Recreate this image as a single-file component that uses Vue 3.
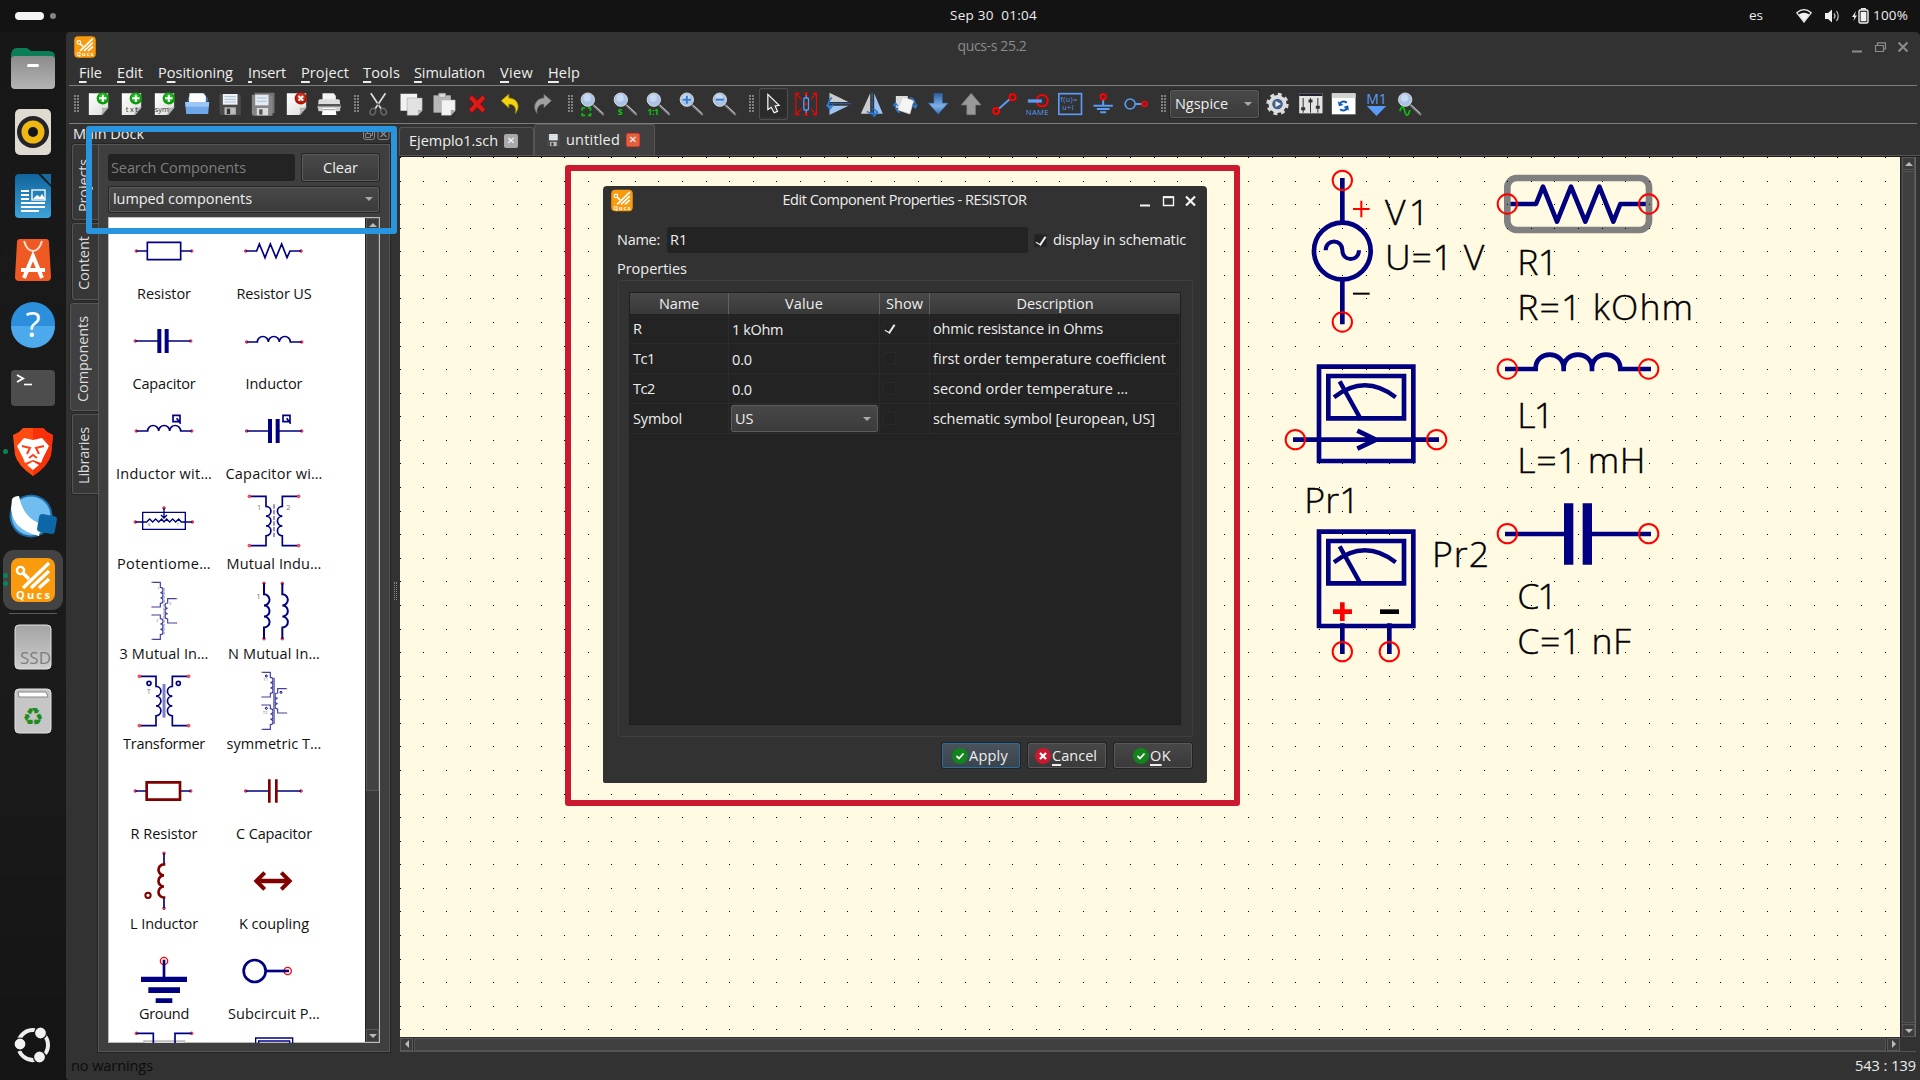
<script setup>
const measure = (el) => {
  const r = document.createRange()
  r.selectNodeContents(el)
  const b = r.getBoundingClientRect()
  return Math.max(b.width, b.height)
}
// Tracks a label so that it fills the given advance width
const vFit = {
  mounted(el, { value }) {
    if (!value) return
    const n = el.textContent.length
    el.style.letterSpacing = ((value - measure(el)) / n).toFixed(3) + 'px'
  },
}

const menus = [
  ['F', 'ile', 23, 38], ['E', 'dit', 26, 41], ['P', 'ositioning', 75, 90, 'o'], ['I', 'nsert', 38, 53],
  ['P', 'roject', 48, 62], ['T', 'ools', 37, 51], ['S', 'imulation', 71, 86], ['V', 'iew', 33, 48], ['H', 'elp', 32, 40],
]

/* ---------- toolbar glyphs (units: one third of a pixel, origin in the centre) ---------- */
const page = '<path d="M-28-32H30V12L12 33H-28Z" fill="url(#pg)"/><path d="M30 10L10 33Q18 20 12 12Q20 16 30 10Z" fill="#bbb" stroke="#888" stroke-width="1.5"/>'
const plus = '<circle cx="14" cy="-17" r="18.5" fill="#0a9a0a"/><circle cx="14" cy="-19" r="13" fill="#22b822"/><path d="M14-28V-6M3-17H25" stroke="#fff" stroke-width="6"/>'
const floppy = '<path d="M-32-30H26L32-24V33H-28L-32 28Z" fill="#4a4a4a"/><rect x="-22" y="-30" width="44" height="32" fill="#eef3f8"/><path d="M-17-22H17M-17-14H17M-17-6H17" stroke="#aebfd0" stroke-width="3"/><rect x="-17" y="10" width="34" height="22" fill="#bbb"/><rect x="-10" y="14" width="10" height="16" fill="#333"/>'
const lens = '<path d="M4 4L33 31" stroke="#777" stroke-width="7" stroke-linecap="round"/><path d="M6 4L32 28" stroke="#ccc" stroke-width="3"/><circle cx="-13" cy="-13" r="20" fill="#a9c4e6" stroke="#d8d8d8" stroke-width="3"/><circle cx="-15" cy="-18" r="11" fill="#cfe0f4" opacity=".8"/>'
const file1 = [
  page + plus,
  page + plus + '<text x="-16" y="23" font-size="22" fill="#333" textLength="36">txt</text>',
  page + plus + '<text x="-28" y="23" font-size="22" fill="#333" textLength="42">sym</text>',
  '<path d="M-30-8L-26-22H-20V-32H24V-22H30L34-8Z" fill="#3d6fae"/><path d="M-23-32H18L26-24V0H-25Z" fill="#fff"/><path d="M-36-6H36L33 30H-33Z" fill="#6ea8ea"/><path d="M-36-6H36L35 8H-35Z" fill="#9cc6f5"/>',
  floppy,
  '<g opacity=".75"><path d="M-26-34H34V28H-20Z" fill="#888"/></g><g transform="translate(-2 2)"><path d="M-32-30H24L30-24V33H-28L-32 28Z" fill="#858585"/><rect x="-22" y="-30" width="40" height="32" fill="#e3eaf2"/><path d="M-17-20H13M-17-10H13" stroke="#aebfd0" stroke-width="3"/><rect x="-17" y="10" width="34" height="22" fill="#ddd"/><rect x="-10" y="14" width="10" height="16" fill="#555"/></g>',
  page + '<circle cx="14" cy="-17" r="18.5" fill="#b01205"/><circle cx="14" cy="-20" r="13" fill="#c9341f"/><path d="M7-24L21-10M21-24L7-10" stroke="#fff" stroke-width="6"/>',
  '<path d="M-20-32H14L20-24V-6H-20Z" fill="#f4f4f4"/><path d="M-32-6Q-34-14-26-14H26Q34-14 32-6L35 12H-35Z" fill="#ddd"/><rect x="-33" y="0" width="66" height="8" fill="#555"/><rect x="-33" y="8" width="66" height="14" rx="4" fill="#cfcfcf"/><path d="M-18 12H18L22 33H-22Z" fill="#fff"/><path d="M-18 17H18" stroke="#999" stroke-width="3"/>',
]
const edit = [
  '<path d="M-22-32L9 14M22-32L-9 14" stroke="#ddd" stroke-width="5"/><path d="M-3-2L3 4" stroke="#555" stroke-width="5"/><ellipse cx="-16" cy="23" rx="8" ry="10" fill="none" stroke="#666" stroke-width="4.5" transform="rotate(35 -16 23)"/><ellipse cx="16" cy="23" rx="8" ry="10" fill="none" stroke="#666" stroke-width="4.5" transform="rotate(-35 16 23)"/>',
  '<path d="M-32-31H18V12L6 20H-32Z" fill="#f2f2f2"/><path d="M-12-18H33V20L20 34H-12Z" fill="#e2e2e2" stroke="#999" stroke-width="1.5"/><path d="M33 18L20 34Q24 24 20 18Z" fill="#aaa"/>',
  '<path d="M-32-26H20V26H-32Z" fill="#b8b8b8"/><path d="M-16-32H4V-20H-16Z" fill="#dcdcdc" stroke="#999" stroke-width="2"/><path d="M-8-12H33V20L20 34H-8Z" fill="#f3f3f3" stroke="#aaa" stroke-width="1.5"/><path d="M33 18L20 34V18Z" fill="#aaa"/>',
  '<path d="M-20-21L20 21M20-21L-20 21" stroke="#8d0505" stroke-width="17"/><path d="M-20-21L20 21M20-21L-20 21" stroke="#d81c1c" stroke-width="12"/>',
  '<path d="M-27-10L-4-30V-18C20-18 34 6 15 29C20 10 10 0-4 1V12Z" fill="#f2d411" stroke="#9a8400" stroke-width="2"/>',
  '<path d="M25-10L2-30V-18C-20-18-36 6-18 29C-20 10-10 0 2 1V12Z" fill="#a0a0a0" stroke="#555" stroke-width="2"/>',
]
const zooms = [
  lens + '<path d="M-30 20V12H-21M-13 12H-5V20M-5 27V34H-13M-21 34H-30V27" fill="none" stroke="#0ac20a" stroke-width="5"/>',
  lens + '<text x="-22" y="32" font-size="30" font-weight="700" fill="#0ac20a">s</text>',
  lens + '<text x="-33" y="32" font-size="27" font-weight="700" fill="#0ac20a" textLength="36">1:1</text>',
  lens + '<path d="M-13-25V-1M-25-13H-1" stroke="#3a7cd0" stroke-width="6"/>',
  lens + '<path d="M-25-13H-1" stroke="#3a7cd0" stroke-width="6"/>',
]
const tools = [
  '<path d="M-16-29V17L-6 10L3 26L13 22L6 6L18 4Z" fill="#3a3a3a" stroke="#fff" stroke-width="3.5"/>',
  '<path d="M-20-32H-31V32H-20M20-32H31V32H20M-31-32L31 32M31-32L-31 32" fill="none" stroke="#f00" stroke-width="3.5"/><path d="M0-32V32" stroke="#f00" stroke-width="5"/><rect x="-14" y="-22" width="28" height="44" fill="#323232"/><path d="M0-32V32" stroke="#5a9bf5" stroke-width="4"/><rect x="-7" y="-18" width="14" height="36" rx="3" fill="#323232" stroke="#5a9bf5" stroke-width="4"/><circle cx="0" cy="-31" r="5" fill="#f00"/><circle cx="0" cy="31" r="5" fill="#f00"/><circle cx="0" cy="0" r="4" fill="#f00"/>',
  '<path d="M-29-34L28-6H-29Z" fill="#ccc"/><path d="M-29 33L28 5H-29Z" fill="#9fc2ee"/><path d="M-32-1H34" stroke="#2a7de0" stroke-width="3" stroke-dasharray="5 2"/><path d="M-22-20Q-38 0-30 8M-38 2L-28 15L-18 2" fill="none" stroke="#2a7de0" stroke-width="5"/>',
  '<path d="M-34 29L-6-32V29Z" fill="#ccc"/><path d="M32 29L6-32V29Z" fill="#9fc2ee"/><path d="M0-34V34" stroke="#2a7de0" stroke-width="3" stroke-dasharray="5 2"/><path d="M-16 22Q0 34 14 26M4 14L16 25L4 38" fill="none" stroke="#2a7de0" stroke-width="5"/>',
  '<path d="M-28-24H8V12H-28Z" fill="#ddd"/><path d="M-8-22L26-10L14 30L-22 18Z" fill="#f5f5f5" stroke="#ccc" stroke-width="2"/><path d="M-30 2Q-28 22-16 26M-36 6L-29-3L-22 6" fill="none" stroke="#2a7de0" stroke-width="4"/><path d="M14-20Q32-16 30 8M22 2L30 12L36 2" fill="none" stroke="#2a7de0" stroke-width="4"/>',
  '<path d="M-13-32H13V-3H30L0 31L-30-3H-13Z" fill="url(#bl)" stroke="#2b5a94" stroke-width="2"/>',
  '<path d="M-13 32H13V3H30L0-32L-30 3H-13Z" fill="#999" stroke="#777" stroke-width="2"/>',
  '<path d="M-16 14L18-16" stroke="#5a9bf5" stroke-width="6"/><circle cx="-24" cy="21" r="9" fill="none" stroke="#f00" stroke-width="6"/><circle cx="25" cy="-20" r="9" fill="none" stroke="#f00" stroke-width="6"/>',
  '<circle cx="15" cy="-10" r="17" fill="none" stroke="#f00" stroke-width="6"/><path d="M-28-9H14" stroke="#5a9bf5" stroke-width="10"/><text x="-34" y="32" font-size="23" fill="#5a9bf5" textLength="68">NAME</text>',
  '<rect x="-34" y="-31" width="68" height="62" fill="none" stroke="#5a9bf5" stroke-width="5"/><text x="-29" y="-6" font-size="21" fill="#5a9bf5" textLength="50">f(u)=</text><text x="-24" y="17" font-size="21" fill="#5a9bf5" textLength="34">u+i</text>',
  '<path d="M0-12V4M-29 5H29M-19 15H19M-9 25H9" stroke="#5a9bf5" stroke-width="6"/><circle cx="0" cy="-22" r="8" fill="none" stroke="#f00" stroke-width="6"/>',
  '<path d="M-2 0H18" stroke="#5a9bf5" stroke-width="6"/><circle cx="-18" cy="0" r="15" fill="none" stroke="#5a9bf5" stroke-width="5"/><circle cx="25" cy="0" r="7" fill="none" stroke="#f00" stroke-width="5.5"/>',
]
const sims = [
  '<circle r="27" fill="none" stroke="#d9d9d9" stroke-width="13" stroke-dasharray="11 10.2"/><circle r="20" fill="none" stroke="#dedede" stroke-width="14"/><circle r="16" fill="#41618f"/><path d="M-6-9L11 0L-6 9Z" fill="#eee"/>',
  '<rect x="-34" y="-32" width="70" height="60" fill="#e3e3e3"/><path d="M-34-32H36V-24H-34Z" fill="#223"/><path d="M-22-18V26M0-18V26M22-18V26" stroke="#333" stroke-width="3"/><path d="M-28 14H-16M-6-9H6M16 10H28" stroke="#333" stroke-width="9"/>',
  '<rect x="-35" y="-32" width="71" height="63" fill="#fff"/><rect x="-35" y="-32" width="71" height="14" fill="#d4d4d4"/><path d="M-10-2Q-2-12 10-4M10 14Q2 24-10 16" fill="none" stroke="#0c5cb8" stroke-width="6"/><path d="M-17-8L-14 7L0 3ZM16 20L14 4L0 9Z" fill="#0c5cb8"/>',
  '<text x="-31" y="0" font-size="42" fill="#5a9bf5" textLength="62">M1</text><path d="M-29 6H29L0 36Z" fill="#5a9bf5"/>',
  lens + '<path d="M-29 22C-24 4-18 6-14 22S-4 38 1 18" fill="none" stroke="#0ac20a" stroke-width="5"/>',
]
const groups = [file1, edit, zooms, tools]

/* ---------- component library symbols ---------- */
const N = '#000080', M = '#800000'
const dots = (...p) => p.map(([x, y, r = 4]) => `<circle cx="${x}" cy="${y}" r="${r}" fill="#f66" stroke="#e8304a" stroke-width="3"/>`).join('')
const ln = (d, w = 5, c = N) => `<path d="${d}" fill="none" stroke="${c}" stroke-width="${w}"/>`
const q = ln('M27-47H48V-28H27ZM38-38L50-22', 5)
const coilH = () => 'a16.5 16.5 0 0 1 33 0a16.5 16.5 0 0 1 33 0a16.5 16.5 0 0 1 33 0'
const coilV = (r, s, n = 3) => `a${r} ${r} 0 0 ${s} 0 ${2 * r}`.repeat(n)
const tiny = (t, x, y, s = 18) => `<text x="${x}" y="${y}" font-size="${s}" fill="#777">${t}</text>`
const three = (core, extra) => `<g opacity=".75">${ln('M-36-86H-11V-71' + coilV(8, 1) + 'V-12H-36M-36 12H-11V23' + coilV(8, 1) + 'V85H-36M38-37H11V-24' + coilV(8, 0) + 'V36H38', 3.5)}${dots([-36, -86, 1], [-36, -12, 1], [-36, 12, 1], [-36, 85, 1], [38, -37, 1], [38, 36, 1])}</g>${core}${extra}`
const trafo = (core, extra) => ln('M-74-74H-24V-44' + coilV(14.7, 1) + 'V74H-74M74-74H25V-44' + coilV(14.7, 0) + 'V74H74') + dots([-74, -74], [-74, 74], [74, -74], [74, 74]) + core + extra
const parts = [
  ['Resistor', 54, dots([-83, 0], [83, 0]) + ln('M-83 0H-50M50 0H83M-50-26H50V26H-50Z')],
  ['Resistor US', 75, dots([-85, 0], [81, 0]) + ln('M-85 0H-52L-44-21L-27 20L-11-21L6 20L23-21L39 20L48 0H81')],
  ['Capacitor', 63, dots([-86, 0], [80, 0]) + ln('M-86 0H-14M8 0H80') + ln('M-14-36V36M8-36V36', 12)],
  ['Inductor', 57, dots([-82, 3], [83, 3]) + ln('M-82 3H-50' + coilH() + 'H83')],
  ['Inductor wit…', 96, dots([-83, 0], [83, 0]) + ln('M-83 0H-49' + coilH() + 'H83') + q],
  ['Capacitor wi…', 97, dots([-82, 0], [83, 0]) + ln('M-82 0H-12M11 0H83') + ln('M-12-36V36M11-36V36', 12) + q],
  ['Potentiome…', 94, dots([-86, 3], [85, 3], [0, -39]) + ln('M-86 3H-52L-43-6L-34 3L-25-6L-16 3L-7-6L0 3L8-6L17 3L26-6L35 3L44-6L52 3H85M-64-26H64V25H-64ZM0-39V-10M-9-18L0-9L9-18', 4) + tiny('B', -49, 16, 12) + tiny('T', 38, 16, 12)],
  ['Mutual Indu…', 95, trafo('<path d="M0-50V50" stroke="#8080c0" stroke-width="5" stroke-dasharray="13 4"/>', tiny('1', -51, -32, 22) + tiny('2', 37, -32, 22))],
  ['3 Mutual In…', 89, three('<path d="M0-70V70" stroke="#9a9acc" stroke-width="4" stroke-dasharray="9 3"/>', tiny('1', -20, -64, 12) + tiny('2', -24, 34, 12) + tiny('3', 15, -17, 12))],
  ['N Mutual In…', 92, dots([-30, -83], [-30, 83], [25, -83], [25, 83]) + ln('M-30-83V-50' + coilV(16.6, 1) + 'V83M25-83V-50' + coilV(16.6, 1) + 'V83', 6) + tiny('1', -53, -37, 24)],
  ['Transformer', 82, trafo('<path d="M0-51V50" stroke="#8080c0" stroke-width="9"/>', '<circle cx="-45" cy="-53" r="6" fill="none" stroke="#000080" stroke-width="5"/><circle cx="43" cy="-53" r="6" fill="none" stroke="#000080" stroke-width="5"/>' + tiny('T', -51, -22, 20))],
  ['symmetric T…', 95, three('<path d="M0-70V69" stroke="#8080c0" stroke-width="6"/>', '<circle cx="-23" cy="-75" r="3" fill="none" stroke="#000080" stroke-width="3"/><circle cx="-23" cy="22" r="3" fill="none" stroke="#000080" stroke-width="3"/><circle cx="21" cy="-26" r="3" fill="none" stroke="#000080" stroke-width="3"/>' + tiny('T1', -32, -59, 13) + tiny('T2', -34, 38, 13))],
  ['R Resistor', 67, dots([-86, 0], [80, 0]) + ln('M-86 0H-52M48 0H80') + ln('M-52-26H48V26H-52Z', 8, M)],
  ['C Capacitor', 76, dots([-85, 0], [81, 0]) + ln('M-85 0H-14M7 0H81') + ln('M-14-35V35M7-35V35', 8, M)],
  ['L Inductor', 68, dots([0, -83], [0, 82]) + ln('M0-83V-50M0 50V82') + ln('M4-50H0' + coilV(16.6, 0) + 'H4', 8, M) + '<circle cx="-48" cy="43" r="8" fill="none" stroke="#800000" stroke-width="6"/>'],
  ['K coupling', 70, ln('M-52 0H48', 13, M) + ln('M-28-25L-53 0L-28 25M22-25L47 0L22 25', 12, M)],
  ['Ground', 50, '<circle cy="-30" r="11" fill="none" stroke="#f00" stroke-width="4"/>' + ln('M0-34V20', 8) + '<path d="M-69 17H69V33H-69ZM-47 49H48V66H-47ZM-25 82H25V96H-25Z" fill="#000080"/>'],
  ['Subcircuit P…', 92, '<circle cx="-58" r="33" fill="none" stroke="#000080" stroke-width="8"/><circle cx="41" r="11" fill="none" stroke="#f00" stroke-width="4"/>' + ln('M-25 0H45', 8)],
  ['', 0, '<path d="M-60-60H61V-40H-60Z" fill="#ddd" stroke="#bbb" stroke-width="5"/>' + dots([-83, -83], [83, -83]) + ln('M-83-83H-32V-50M83-83H33V-50')],
  ['', 0, ln('M-55-20V-69H56V-20M-46-20V-60H47V-20', 4)],
]

/* ---------- launcher ---------- */
const qucs = '<rect x="-22" y="-22" width="44" height="44" rx="8" fill="#f99b0c"/><circle cx="-12.500" cy="-9.500" r="3.600" fill="none" stroke="#fff" stroke-width="2.400"/><path d="M-10-7L-4-1M-10 8L16-17M-2 8L16-9M6 8L16-1" stroke="#fff" stroke-width="3.400"/><text x="-17" y="19" font-size="11" font-weight="700" fill="#fff" textLength="34">Qucs</text>'
const apps = [
  '<path d="M-22-12Q-22-20-16-20H-6L-2-17H16Q22-17 22-11V4H-22Z" fill="#0b7d57"/><rect x="-22" y="-12" width="44" height="33" rx="4" fill="url(#gy)"/><rect x="-6" y="-4" width="12" height="3" rx="1.500" fill="#fff"/>',
  '<rect x="-18" y="-23" width="36" height="46" rx="5" fill="#e0dbd1"/><circle r="16" fill="#23232b"/><circle r="11.500" fill="#efb810"/><circle r="5" fill="#15151c"/>',
  '<path d="M-18-18Q-18-22-14-22H5L18-9V18Q18 22 14 22H-14Q-18 22-18 18Z" fill="url(#wr)"/><path d="M8-22H18V-11Z" fill="#176aa0"/><path d="M-12-5H-4M-12-1H-4M-12 3H-4M-12 7H12M-12 11H12M-12 15H6" stroke="#fff" stroke-width="1.800"/><rect x="-1" y="-6" width="13" height="10" fill="none" stroke="#fff" stroke-width="1.300"/><path d="M0 3L4-1L7 1L9-2L12 3Z" fill="#fff"/>',
  '<path d="M-16-18Q-16-21-13-21H13Q16-21 16-18L18 17Q18 21 14 21H-14Q-18 21-18 17Z" fill="#ef5a24"/><path d="M-9-19Q-6-9 0-9T9-19" fill="none" stroke="#ffe4d8" stroke-width="2"/><path d="M-9 18L0-4L9 18M-12 10H12" fill="none" stroke="#fff" stroke-width="4"/>',
  '<circle r="22" fill="#2b8fdc"/><path d="M-22 2A22 22 0 0 0 22 2Z" fill="#4ba9ec"/><text x="0" y="13" font-size="35" fill="#fff" text-anchor="middle">?</text>',
  '<rect x="-22" y="-18" width="44" height="36" rx="4" fill="#4d4d4d"/><path d="M-16-13L-10-9.500L-16-6" fill="none" stroke="#fff" stroke-width="2"/><path d="M-9-3.500H-1" stroke="#fff" stroke-width="1.600"/>',
  '<path d="M-10-24H10L14-20L20-17L18 3Q15 14 0 24Q-15 14-18 3L-20-17L-14-20Z" fill="#ff4a12"/><path d="M0-24H10L14-20L20-17L18 3Q15 14 0 24Z" fill="#f9310b"/><path d="M-9-14L0-12L9-14L16-6L10 6L8 11L0 8L-8 11L-10 6L-16-6Z" fill="#fff"/><path d="M-11-6L-3-4L-6 2M11-6L3-4L6 2M-4 6L0 3L4 6" fill="none" stroke="#f9401b" stroke-width="2"/><path d="M-6 13L0 9.500L6 13L0 18Z" fill="#fff"/>',
  '<circle cx="-2" cy="0" r="21.500" fill="#1c6aa8"/><circle cx="-2" cy="0" r="19.500" fill="#72bdf0"/><path d="M-21-17Q-19-20-14-20Q-10 2 8 8L6 20Q-20 14-22-7Z" fill="#fff"/><rect x="5" y="-1" width="18" height="18" rx="3" fill="#0d66a6" transform="rotate(10 14 8)"/>',
  '<rect x="-30" y="-30" width="60" height="60" rx="11" fill="#434343"/>' + qucs,
]
const drives = [
  '<rect x="-18" y="-22" width="36" height="44" rx="4" fill="url(#dg)" stroke="#e2e2e2"/><text x="-13" y="16.500" font-size="16.500" fill="#7f7f7f" textLength="31" lengthAdjust="spacingAndGlyphs">SSD</text>',
  '<rect x="-18" y="-22" width="36" height="44" rx="4" fill="#c6c6c6" stroke="#e2e2e2"/><path d="M-15-19H13L15-14H-14Z" fill="#fff" stroke="#888"/><text x="0" y="14" font-size="24" font-family="DejaVu Sans" fill="#1f8a1f" text-anchor="middle">♻</text>',
]

/* ---------- schematic grid ---------- */
const gridDots = (() => {
  let d = ''
  for (let i = 0; i < 64; i++) {
    for (let j = 0; j < 38; j++) {
      d += `M${Math.max(400, Math.floor(399.6 + 23.579 * i))} ${Math.floor(157.45 + 23.579 * j)}h1v1h-1z`
    }
  }
  return d
})()
const pins = [[217, 91], [217, 516], [76, 869], [500, 869], [712, 162], [1136, 162], [712, 657], [1136, 657], [712, 1151], [1136, 1151], [217, 1505], [358, 1505]]
const labels = [
  ['V1', 350, 226, 124], ['U=1 V', 350, 361, 290], ['R1', 747, 374, 114], ['R=1 kOhm', 747, 509, 519],
  ['L1', 747, 834, 102], ['L=1 mH', 747, 968, 376], ['Pr1', 108, 1088, 158], ['Pr2', 491, 1250, 163],
  ['C1', 747, 1376, 113], ['C=1 nF', 747, 1511, 333],
]
const rows = [
  ['R', 9, '1 kOhm', 51, true, 'ohmic resistance in Ohms', 170],
  ['Tc1', 22, '0.0', 20, false, 'first order temperature coefficient', 233],
  ['Tc2', 22, '0.0', 20, false, 'second order temperature …', 195],
]
const heads = [['Name', 40, 'c1'], ['Value', 38, 'c2'], ['Show', 37, 'c3'], ['Description', 77, 'c4']]
const sideTabs = [['Projects', 53, 't1'], ['Content', 54, 't2'], ['Components', 86, 't3'], ['Libraries', 57, 't4']]
</script>

<template>
  <div class="desktop">
    <svg class="defs" width="0" height="0">
      <defs>
        <linearGradient id="pg" x1="0" y1="0" x2="1" y2="1"><stop offset="0" stop-color="#fff" /><stop offset="1" stop-color="#dcdcd8" /></linearGradient>
        <linearGradient id="bl" x1="0" y1="0" x2="0" y2="1"><stop offset="0" stop-color="#2f5f9c" /><stop offset=".6" stop-color="#7db1ea" /><stop offset="1" stop-color="#3d73b5" /></linearGradient>
        <linearGradient id="gy" x1="0" y1="0" x2="0" y2="1"><stop offset="0" stop-color="#8b8b8b" /><stop offset="1" stop-color="#b5b5b5" /></linearGradient>
        <linearGradient id="wr" x1="0" y1="0" x2="0" y2="1"><stop offset="0" stop-color="#10639b" /><stop offset="1" stop-color="#3fa3da" /></linearGradient>
        <linearGradient id="dg" x1="0" y1="0" x2="0" y2="1"><stop offset="0" stop-color="#a3a3a3" /><stop offset="1" stop-color="#cfcfcf" /></linearGradient>
      </defs>
    </svg>

    <header class="topbar">
      <div class="spaces"><i class="pill"></i><i class="dot"></i></div>
      <div class="clock"><span v-fit="87">Sep 30&nbsp; 01:04</span></div>
      <div class="tray">
        <span class="lang">es</span>
        <svg class="wifi" width="16" height="14" viewBox="0 0 16 14"><path d="M.8 3.800Q8-2.500 15.200 3.800L8 13Z" fill="none" stroke="#f2f2f2" stroke-width="1.200" /><path d="M2.600 5.400Q8 2.200 13.400 5.400L8 12.600Z" fill="#f2f2f2" /></svg>
        <svg class="vol" width="16" height="14" viewBox="0 0 16 14"><path d="M0 4H3L7 .5V13.500L3 10H0Z" fill="#f2f2f2" /><path d="M9 4.500Q11 7 9 9.500M11.500 2Q15 7 11.500 12" fill="none" stroke="#bbb" stroke-width="1.300" /></svg>
        <svg class="bat" width="17" height="16" viewBox="0 0 17 16"><path d="M4 3L0 9H2.400L1.400 13L5 7.500H2.800Z" fill="#f2f2f2" /><rect x="7" y="2" width="9" height="13" rx="1.500" fill="none" stroke="#f2f2f2" stroke-width="1.400" /><rect x="8.600" y="3.800" width="5.800" height="9.500" fill="#f2f2f2" /><path d="M9 .8H14" stroke="#f2f2f2" stroke-width="1.500" /></svg>
        <span v-fit="35">100%</span>
      </div>
    </header>

    <div class="main">
      <aside class="launcher">
        <svg v-for="(a, i) in apps" :key="i" width="66" height="64" viewBox="-33 -32 66 64" v-html="a"></svg>
        <i class="rule"></i>
        <svg v-for="(a, i) in drives" :key="'d' + i" width="66" height="64" viewBox="-33 -32 66 64" v-html="a"></svg>
        <i class="run r1"></i><i class="run r2"></i><i class="run r3"></i>
        <svg class="ubuntu" width="40" height="40" viewBox="-20 -20 40 40">
          <circle r="15" fill="none" stroke="#eee" stroke-width="4" stroke-dasharray="22.400 9" transform="rotate(-50)" />
          <g stroke="#151515" stroke-width="1.200" fill="#f2f2f2"><circle cx="-13" cy="-1" r="6" /><circle cx="7.500" cy="-12" r="6" /><circle cx="6.500" cy="12" r="6" /></g>
        </svg>
      </aside>

      <section class="window">
        <div class="titlebar">
          <svg width="22" height="22" viewBox="-22.500 -22.500 45 45" v-html="qucs"></svg>
          <span class="title"><span v-fit="69">qucs-s 25.2</span></span>
          <svg class="wbtn" width="58" height="14" viewBox="0 0 58 14" fill="none" stroke="#8c8c8c">
            <path d="M0 11.500H10" stroke-width="2" /><path d="M23.500 5.500H31.500V11.500H23.500ZM25.500 5V2.800H33.500V9H32" stroke-width="1.200" /><path d="M46.500 2.500L55.500 11.500M55.500 2.500L46.500 11.500" stroke-width="2" />
          </svg>
        </div>
        <nav class="menu">
          <div v-for="(m, i) in menus" :key="i" :class="['mi', 'm' + i]">
            <span v-fit="m[2]"><template v-if="m[4]">P<u>o</u>sitioning</template><template v-else><u>{{ m[0] }}</u>{{ m[1] }}</template></span>
          </div>
        </nav>
        <div class="toolbar">
          <template v-for="(g, gi) in groups" :key="gi">
            <i class="grip"></i>
            <svg v-for="(s, i) in g" :key="i" :class="{ picked: gi === 3 && i === 0 }" width="33" height="36" viewBox="-48.500 -54 99 108" v-html="s"></svg>
          </template>
          <i class="grip"></i>
          <div class="combo engine"><span v-fit="53">Ngspice</span><i class="tri"></i></div>
          <svg v-for="(s, i) in sims" :key="'s' + i" width="33" height="36" viewBox="-49.500 -54 99 108" v-html="s"></svg>
        </div>

        <div class="body">
          <div class="dock">
            <div class="dockhead">
              <span v-fit="71">Main Dock</span>
              <svg width="27" height="12" viewBox="0 0 27 12" fill="none" stroke="#858585"><rect x=".5" y=".5" width="11" height="11" rx="2" /><path d="M2.500 5.500H7.500V9.500H2.500ZM4.500 5V2.500H9.500V7.500H8" /><rect x="15" y=".5" width="11" height="11" rx="2" /><path d="M17.500 3L23.500 9M23.500 3L17.500 9" stroke-width="1.500" /></svg>
            </div>
            <div class="dockbody">
              <div class="tabs">
                <div v-for="t in sideTabs" :key="t[0]" :class="['stab', t[2]]"><span v-fit="t[1]">{{ t[0] }}</span></div>
              </div>
              <div class="pane">
                <div class="find">
                  <div class="search"><span v-fit="135">Search Components</span></div>
                  <div class="clear"><span v-fit="35">Clear</span></div>
                </div>
                <div class="combo cat"><span v-fit="139">lumped components</span><i class="tri"></i></div>
                <div class="list">
                  <div class="cells">
                    <div v-for="(p, i) in parts" :key="i" class="cell">
                      <svg width="110" height="65" viewBox="-165 -99 330 195" v-html="p[2]"></svg>
                      <span v-if="p[0]" v-fit="p[1]">{{ p[0] }}</span>
                    </div>
                  </div>
                  <div class="vscroll"><i class="btn up"></i><i class="thumb"></i><i class="rest"></i><i class="btn down"></i></div>
                </div>
              </div>
            </div>
          </div>
          <div class="splitter"><i></i></div>

          <div class="work">
            <div class="doctabs">
              <div class="dt one"><span v-fit="89">Ejemplo1.sch</span><i class="x">✕</i></div>
              <div class="dt two">
                <svg width="13" height="14" viewBox="-33 -33 67 67" v-html="floppy"></svg>
                <span v-fit="54">untitled</span><i class="x red">✕</i>
              </div>
            </div>
            <div class="sheet">
              <div class="canvasrow">
                <svg class="canvas" width="1500" height="880" viewBox="400 157 1500 880">
                  <rect x="400" y="157" width="1500" height="880" fill="#fffae1" />
                  <g transform="translate(1270 150) scale(.33333)" fill="none" stroke="#000080" stroke-width="14">
                    <path d="M217 84V219M217 388V523" />
                    <circle cx="217" cy="303" r="85" />
                    <path d="M167 301C167 266 217 266 217 301S267 336 267 301" stroke-width="12" />
                    <path d="M249 177H299M274 152V202" stroke="#f00" stroke-width="6" />
                    <path d="M249 431H299" stroke="#000" stroke-width="6" />
                    <path d="M719 162H798L819 110L861 215L903 110L946 215L988 110L1030 215L1051 162H1130" stroke-linejoin="round" />
                    <rect x="712" y="84" width="425" height="156" rx="28" stroke="#808080" stroke-width="20" />
                    <path d="M705 657H797V655C797 600 881 600 881 655V664V655C881 600 966 600 966 655V664V655C966 600 1051 600 1051 657H1143" />
                    <path d="M705 1152H883M966 1152H1143" /><path d="M896 1060V1244M952 1060V1244" stroke-width="28" />
                    <g id="meter"><path d="M147 650H430V933H147ZM175 678H402V805H175Z" /><path d="M192 742Q285 670 377 742M209 694L273 809" stroke-width="13" /></g>
                    <path d="M69 869H507M262 842L318 869L262 896" />
                    <use href="#meter" y="495" />
                    <path d="M217 1420V1512M358 1420V1512" />
                    <path d="M189 1385H246M217 1357V1413" stroke="#f00" /><path d="M330 1385H387" stroke="#000" />
                    <circle v-for="(p, i) in pins" :key="i" :cx="p[0]" :cy="p[1]" r="29" stroke="#f00" stroke-width="6" />
                  </g>
                  <path :d="gridDots" fill="#000" shape-rendering="crispEdges" />
                  <g class="slabels" transform="translate(1270 150) scale(.33333)">
                    <text v-for="l in labels" :key="l[0]" :x="l[1] - 5" :y="l[2]" :textLength="l[3] + 8">{{ l[0] }}</text>
                  </g>
                </svg>
                <div class="vscroll cv"><i class="btn up"></i><i class="thumb"></i><i class="btn down"></i></div>
              </div>
              <div class="hscroll"><i class="btn left"></i><i class="thumb"></i><i class="btn right"></i></div>
            </div>
          </div>
        </div>
        <footer class="status"><span v-fit="82">no warnings</span><span class="pos" v-fit="61">543 : 139</span></footer>
      </section>
    </div>

    <div class="mark red-mark"></div>
    <div class="mark blue-mark"></div>

    <div class="dialog">
      <div class="dtitle">
        <svg width="22" height="23" viewBox="-22.500 -22.500 45 45" v-html="qucs"></svg>
        <span class="title"><span v-fit="244">Edit Component Properties - RESISTOR</span></span>
        <svg class="wbtn" width="58" height="14" viewBox="0 0 58 14" fill="none" stroke="#f5f5f5"><path d="M1 11.500H11" stroke-width="2" /><path d="M24.500 3H34.500V11.500H24.500Z" stroke-width="1.400" /><path d="M24 3.200H35" stroke-width="2" /><path d="M47 2.500L56 11.500M56 2.500L47 11.500" stroke-width="2.200" /></svg>
      </div>
      <div class="nrow">
        <span class="lab"><span v-fit="43">Name:</span></span>
        <div class="input"><span>R1</span></div>
        <i class="check on"></i>
        <span v-fit="133">display in schematic</span>
      </div>
      <div class="ptitle"><span v-fit="70">Properties</span></div>
      <div class="group">
        <div class="table">
          <div class="tr head"><div v-for="h in heads" :key="h[0]" :class="['td', h[2]]"><span v-fit="h[1]">{{ h[0] }}</span></div></div>
          <div v-for="r in rows" :key="r[0]" class="tr">
            <div class="td c1"><span v-fit="r[1]">{{ r[0] }}</span></div>
            <div class="td c2 val"><span v-fit="r[3]">{{ r[2] }}</span></div>
            <div class="td c3"><i :class="['check', { on: r[4] }]"></i></div>
            <div class="td c4"><span v-fit="r[6]">{{ r[5] }}</span></div>
          </div>
          <div class="tr">
            <div class="td c1"><span v-fit="49">Symbol</span></div>
            <div class="td c2 pick"><div class="combo"><span>US</span><i class="tri"></i></div></div>
            <div class="td c3"><i class="check"></i></div>
            <div class="td c4"><span v-fit="222">schematic symbol [european, US]</span></div>
          </div>
        </div>
      </div>
      <div class="buttons">
        <div class="pb focus"><svg width="16" height="16" viewBox="0 0 16 16"><circle cx="8" cy="8" r="8" fill="#12841c" /><path d="M4.500 8L7 10.500L11.500 5.500" fill="none" stroke="#fff" stroke-width="1.800" /></svg><span v-fit="39">Apply</span></div>
        <div class="pb"><svg width="16" height="16" viewBox="0 0 16 16"><circle cx="8" cy="8" r="8" fill="#c9182f" /><path d="M5 5L11 11M11 5L5 11" fill="none" stroke="#fff" stroke-width="2.200" /></svg><span v-fit="45"><u>C</u>ancel</span></div>
        <div class="pb"><svg width="16" height="16" viewBox="0 0 16 16"><circle cx="8" cy="8" r="8" fill="#12841c" /><path d="M4.500 8L7 10.500L11.500 5.500" fill="none" stroke="#fff" stroke-width="1.800" /></svg><span v-fit="21"><u>O</u>K</span></div>
      </div>
    </div>
  </div>
</template>

<style>
html, body { margin: 0; background: #151515; overflow: hidden; }
</style>
<style scoped>
* { box-sizing: border-box; }
.desktop { position: relative; width: 1920px; height: 1080px; overflow: hidden; display: flex; flex-direction: column; background: #161616; color: #eee; font: 14.5px/20px "Open Sans", "Noto Sans", sans-serif; white-space: nowrap; }
.defs { position: absolute; }
svg { flex: none; display: block; }
i { font-style: normal; flex: none; }
u { text-decoration-thickness: 1.500px; text-underline-offset: 3px; }

.topbar { height: 32px; flex: none; display: flex; align-items: center; background: #131313; font-size: 13.500px; }
.topbar span { padding-bottom: 2px; }
.spaces { width: 400px; padding-left: 15px; display: flex; align-items: center; gap: 6px; }
.pill { width: 29px; height: 8px; border-radius: 4px; background: #f5f5f5; }
.dot { width: 6px; height: 6px; border-radius: 50%; background: #858585; }
.clock { flex: 1; text-align: center; padding: 0 333px 2px 0; }
.tray { display: flex; align-items: center; margin-left: -171px; width: 171px; }
.lang { width: 47px; }
.wifi { margin-right: 13px; }
.vol { margin-right: 11px; }
.bat { margin-right: 4px; }

.main { flex: 1; display: flex; min-height: 0; }
.launcher { position: relative; width: 66px; flex: none; display: flex; flex-direction: column; padding-top: 4px; background: linear-gradient(180deg, #171717, #1b1b1b 60%, #141414); }
.rule { height: 1px; width: 48px; margin: 1px 9px; background: #5a5a5a; }
.run { position: absolute; left: 3px; width: 5px; height: 5px; border-radius: 50%; background: #0a8457; }
.r1 { top: 417px; } .r2 { top: 541px; } .r3 { top: 549px; }
.ubuntu { margin: auto 0 15px 13px; }

.window { flex: 1; display: flex; flex-direction: column; background: #323232; border-radius: 4px 5px 0 4px; min-width: 0; }
.titlebar { height: 30px; display: flex; align-items: center; padding: 0 10px 0 8px; flex: none; color: #8c8c8c; font-size: 14px; }
.titlebar .title { flex: 1; text-align: center; padding: 0 0 2px 36px; }
.menu { height: 23px; flex: none; display: flex; padding-left: 13px; line-height: 22px; }
.m0 { width: 38px; } .m1 { width: 41px; } .m2 { width: 90px; } .m3 { width: 53px; } .m4 { width: 62px; }
.m5 { width: 51px; } .m6 { width: 86px; } .m7 { width: 48px; }
.toolbar { height: 39px; flex: none; margin: 0 3px; padding: 0 3px 2px 0; border-top: 1px solid #7d7d7d; border-bottom: 1px solid #7d7d7d; display: flex; align-items: center; }
.toolbar .grip:first-child { margin-left: -3px; }
.grip { width: 16px; height: 18px; background: radial-gradient(circle at 1px 1px, #808080 1px, transparent 1.300px) 8px 0 / 3px 3px repeat; background-clip: content-box; padding: 0 3px 0 8px; }
.picked { background: linear-gradient(#2b2b2b, #2b2b2b) center / 28px 27px no-repeat; outline: 1px solid #4e4e4e; outline-offset: -3px; border-radius: 4px; }
.combo { display: flex; align-items: center; border: 1px solid #5a5a5a; box-shadow: 0 0 0 1px #262626; border-radius: 2px; background: linear-gradient(#484848, #3b3b3b); }
.tri { border: 4px solid transparent; border-top-color: #aaa; border-bottom: 0; margin-left: auto; }
.engine { width: 89px; height: 28px; margin: 0 2px 0 1px; padding: 0 6px 0 4px; }

.body { flex: 1; display: flex; min-height: 0; }
.dock { width: 325px; flex: none; display: flex; flex-direction: column; padding: 0 1px 0 4px; }
.dockhead { height: 21px; display: flex; align-items: center; justify-content: space-between; padding: 0 0 0 3px; }
.dockbody { height: 908px; display: flex; }
.tabs { width: 28px; flex: none; display: flex; flex-direction: column; padding-left: 2px; }
.stab { display: flex; align-items: center; justify-content: center; border: 1px solid #565656; border-right: 0; border-radius: 3px 0 0 3px; background: #373737; margin-bottom: 3px; padding: 3px 3px 0 0; color: #ddd; box-shadow: 0 0 0 1px #262626; clip-path: inset(-1px 0 -1px -1px); }
.stab span { writing-mode: vertical-rl; transform: rotate(180deg); }
.t1 { height: 76px; padding-top: 7px; } .t2 { height: 77px; } .t3 { height: 108px; margin-left: -2px; background: #404040; } .t4 { height: 80px; }
.pane { flex: 1; padding: 9px 9px 8px; border: 1px solid #575757; box-shadow: 0 0 0 1px #242424; background: #3f3f3f; display: flex; flex-direction: column; }
.find { height: 27px; display: flex; gap: 6px; }
.search { width: 187px; background: #232323; border-radius: 3px; color: #7e7e7e; padding: 4px 0 0 3px; }
.clear { flex: 1; margin: 0 1px; text-align: center; border: 1px solid #5a5a5a; box-shadow: 0 0 0 1px #262626; border-radius: 2px; background: linear-gradient(#484848, #3b3b3b); padding-top: 3px; }
.cat { height: 25px; margin: 6px 1px 5px; padding: 0 5px 1px 3px; }
.list { flex: 1; min-height: 0; display: flex; border: 1px solid #bbb; background: #fff; }
.cells { flex: 1; display: grid; grid-template-columns: 110px 110px; grid-auto-rows: 90px; align-content: start; overflow: hidden; color: #111; height: 825px; }
.cell { display: flex; flex-direction: column; align-items: center; }
.cell span { line-height: 22px; }
.vscroll { width: 14px; display: flex; flex-direction: column; background: #3a3a3a; border-left: 1px solid #222; }
.btn { display: flex; align-items: center; justify-content: center; width: 13px; height: 13px; border: 1px solid #585858; background: #3c3c3c; }
.btn::after { content: ""; border: 4px solid transparent; }
.up::after { border-bottom-color: #bbb; border-top: 0; }
.down::after { border-top-color: #bbb; border-bottom: 0; }
.left::after { border-right-color: #bbb; border-left: 0; }
.right::after { border-left-color: #bbb; border-right: 0; }
.list .thumb { height: 560px; border: 1px solid #585858; background: #424242; width: 13px; }
.list .rest { flex: 1; }
.splitter { width: 8px; flex: none; padding: 458px 0 0 3px; }
.splitter i { display: block; width: 3px; height: 18px; border-left: 1px dotted #888; border-right: 1px dotted #888; }
.work { flex: 1; display: flex; flex-direction: column; min-width: 0; }
.doctabs { height: 32px; flex: none; display: flex; align-items: flex-end; border-bottom: 1px solid #565656; box-shadow: 0 1px 0 #1d1d1d; }
.dt { display: flex; align-items: center; border: 1px solid #565656; border-bottom: 0; border-radius: 3px 3px 0 0; }
.one { width: 135px; height: 28px; background: #383838; padding: 0 0 2px 9px; gap: 6px; }
.two { width: 121px; height: 31px; background: #404040; padding: 0 0 1px 12px; gap: 6px; }
.x { width: 14px; height: 14px; border-radius: 2px; background: #a9a9a9; color: #fff; font: 700 10px/14px "DejaVu Sans", sans-serif; text-align: center; }
.x.red { background: #e0603f; border: 1px solid #e43b20; line-height: 12px; }
.sheet { display: flex; flex-direction: column; padding: 1px 0 0 1px; width: 1518px; }
.canvasrow { display: flex; border-right: 1px solid #666; width: 1516px; }
.slabels { font-family: "Open Sans", "Noto Sans", sans-serif; font-weight: 300; font-size: 107px; fill: #000; stroke: #000; stroke-width: 1.200; }
.cv { width: 15px; padding-left: 1px; }
.cv .thumb { flex: 1; width: 13px; border: 1px solid #525252; background: #404040; margin: 1px 0; }
.hscroll { display: flex; height: 15px; width: 1516px; align-items: center; border-bottom: 1px solid #555; padding-right: 16px; }
.hscroll .thumb { flex: 1; height: 13px; border: 1px solid #525252; background: #404040; margin: 0 1px; }
.status { height: 29px; flex: none; display: flex; justify-content: space-between; color: #0c0c0c; padding: 5px 4px 0 5px; }
.pos { color: #eee; }

.mark { position: absolute; border-radius: 3px; }
.red-mark { left: 565px; top: 165px; width: 675px; height: 641px; border: 6px solid #cb1a30; }
.blue-mark { left: 86px; top: 126px; width: 311px; height: 108px; border: 6px solid #2a95df; }

.dialog { position: absolute; left: 603px; top: 186px; width: 604px; height: 597px; background: #323232; border-radius: 4px 4px 2px 2px; padding: 0 14px 13px 14px; display: flex; flex-direction: column; }
.dtitle { height: 41px; display: flex; align-items: center; margin: 0 -6px; padding-bottom: 12px; }
.dtitle .title { flex: 1; text-align: center; padding: 0 0 1px 37px; }
.dtitle .wbtn { margin-right: 2px; }
.nrow { height: 26px; display: flex; align-items: center; }
.lab { width: 50px; }
.input { width: 361px; height: 26px; background: #232323; border-radius: 3px; padding: 3px; margin-right: 6px; }
.check { display: flex; width: 13px; height: 13px; border: 1px solid #282828; background: #222; margin-right: 6px; }
.check.on::after { content: ""; width: 4px; height: 9px; margin: 0 0 0 3px; border: solid #eee; border-width: 0 2px 1.500px 0; transform: rotate(30deg) skewX(-4deg); }
.ptitle { height: 27px; padding-top: 6px; }
.group { height: 457px; margin-left: 1px; padding: 11px 11px 12px 10px; border: 1px solid #3e3e3e; border-radius: 2px; }
.table { height: 433px; background: #232323; border: 1px solid #1f1f1f; width: 552px; }
.tr { display: flex; height: 30px; border-bottom: 1px solid #2b2b2b; }
.td { display: flex; align-items: center; padding-left: 3px; border-right: 1px solid #2b2b2b; }
.c1 { width: 99px; } .c2 { width: 151px; } .c3 { width: 50px; } .c4 { flex: 1; }
.val { padding-top: 2px; }
.head { height: 21px; background: linear-gradient(#484848, #383838); border-bottom: 0; }
.head .td { justify-content: center; padding: 0; border-right: 1px solid #626262; }
.head .td:last-child { border-right: 0; }
.pick { padding: 1px 1px 1px 2px; }
.pick .combo { width: 147px; height: 27px; padding: 0 6px 0 3px; border-color: #5c5c5c; }
.buttons { display: flex; justify-content: flex-end; gap: 8px; padding: 6px 1px 0 0; }
.pb { width: 78px; height: 25px; display: flex; align-items: center; justify-content: center; gap: 1px; padding-right: 2px; border: 1px solid #595959; box-shadow: 0 0 0 1px #232323; border-radius: 2px; background: linear-gradient(#474747, #3a3a3a); }
.focus { background: linear-gradient(#48535b, #3a444c); border-color: #2a6c9c; }
</style>
